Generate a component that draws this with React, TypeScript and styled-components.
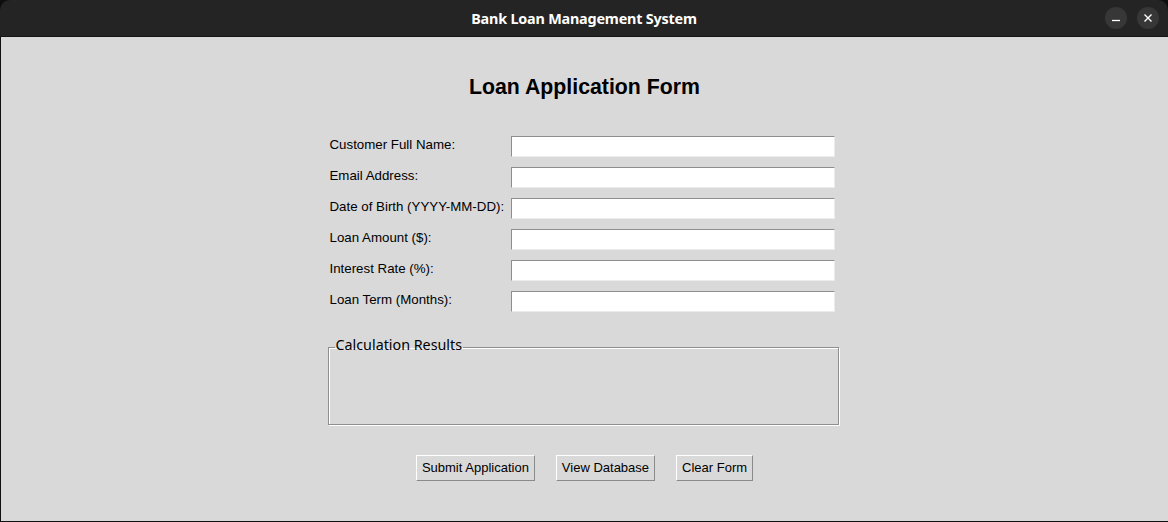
import React from "react";
import styled, { createGlobalStyle } from "styled-components";

const Global = createGlobalStyle`
  html, body { margin: 0; padding: 0; background: #000; }
  body { width: 1168px; height: 522px; overflow: hidden; }
  * { box-sizing: border-box; }
`;

const Window = styled.div`
  width: 1168px;
  height: 522px;
  display: flex;
  flex-direction: column;
  background: #0e0e0e;
`;

const TitleBar = styled.div`
  height: 37px;
  flex: none;
  background: #242424;
  border-radius: 10px 10px 0 0;
  display: flex;
  align-items: center;
  justify-content: center;
  position: relative;
  border-bottom: 1px solid #141414;
`;

const Title = styled.div`
  color: #ffffff;
  font-family: "Noto Sans", sans-serif;
  font-weight: 700;
  font-size: 14.4px;
  letter-spacing: -0.2px;
`;

const Controls = styled.div`
  position: absolute;
  right: 9px;
  top: 7px;
  display: flex;
  gap: 10px;
`;

const CircleBtn = styled.div`
  width: 22px;
  height: 22px;
  border-radius: 50%;
  background: #373737;
  display: flex;
  align-items: center;
  justify-content: center;
`;

const Body = styled.div`
  flex: 1;
  background: #d9d9d9;
  border-left: 1px solid #111;
  border-bottom: 1px solid #111;
  display: flex;
  flex-direction: column;
  align-items: center;
  padding-top: 38px;
  font-family: "Liberation Sans", Arial, sans-serif;
  color: #000;
`;

const Heading = styled.h1`
  margin: 0;
  font-size: 21.3px;
  font-weight: 700;
  line-height: 24px;
  height: 24px;
`;

const Content = styled.div`
  width: 510px;
  margin-left: -2px;
  display: flex;
  flex-direction: column;
`;

const FormGrid = styled.div`
  margin-top: 37px;
  display: grid;
  grid-template-columns: 182px 324px;
  row-gap: 10px;
`;

const Label = styled.label`
  font-size: 13.3px;
  line-height: 17px;
  height: 21px;
  padding-left: 1px;
  white-space: nowrap;
`;

const Entry = styled.div`
  height: 21px;
  background: #ffffff;
  border-top: 1px solid #8e8e8e;
  border-left: 1px solid #8e8e8e;
  border-right: 1px solid #ececec;
  border-bottom: 1px solid #ececec;
`;

const Frame = styled.fieldset`
  margin: 26px 0 0 -1px;
  width: 511px;
  height: 87px;
  padding: 0;
  border: 1px solid #8f8f8f;
  box-shadow: inset 1px 1px 0 #ffffff, 1px 1px 0 #ffffff;
  min-inline-size: 0;
`;

const FrameLegend = styled.legend`
  margin-left: 6px;
  padding: 0 1px 4px 1px;
  background: transparent;
  font-family: "Noto Sans", "DejaVu Sans", sans-serif;
  font-size: 14.3px;
  line-height: 14px;
  color: #000;
`;

const ButtonRow = styled.div`
  margin-top: 30px;
  display: flex;
  justify-content: center;
  gap: 21px;
`;

const Button = styled.button`
  height: 26px;
  padding: 0 5px;
  background: #d9d9d9;
  border-top: 1px solid #ffffff;
  border-left: 1px solid #ffffff;
  border-right: 1px solid #8a8a8a;
  border-bottom: 1px solid #8a8a8a;
  border-radius: 0;
  font-family: "Liberation Sans", Arial, sans-serif;
  font-size: 13px;
  color: #000;
  line-height: 20px;
`;

const fields = [
  "Customer Full Name:",
  "Email Address:",
  "Date of Birth (YYYY-MM-DD):",
  "Loan Amount ($):",
  "Interest Rate (%):",
  "Loan Term (Months):",
];

export default function App() {
  return (
    <>
      <Global />
      <Window>
        <TitleBar>
          <Title>Bank Loan Management System</Title>
          <Controls>
            <CircleBtn>
              <svg width="10" height="10" viewBox="0 0 10 10">
                <line x1="1" y1="7.5" x2="9" y2="7.5" stroke="#fff" strokeWidth="1.3" />
              </svg>
            </CircleBtn>
            <CircleBtn>
              <svg width="10" height="10" viewBox="0 0 10 10">
                <path d="M1.5 1.5 L8.5 8.5 M8.5 1.5 L1.5 8.5" stroke="#fff" strokeWidth="1.4" />
              </svg>
            </CircleBtn>
          </Controls>
        </TitleBar>
        <Body>
          <Heading>Loan Application Form</Heading>
          <Content>
            <FormGrid>
              {fields.map((f) => (
                <React.Fragment key={f}>
                  <Label>{f}</Label>
                  <Entry />
                </React.Fragment>
              ))}
            </FormGrid>
            <Frame>
              <FrameLegend>Calculation Results</FrameLegend>
            </Frame>
          </Content>
          <ButtonRow>
            <Button>Submit Application</Button>
            <Button>View Database</Button>
            <Button>Clear Form</Button>
          </ButtonRow>
        </Body>
      </Window>
    </>
  );
}
